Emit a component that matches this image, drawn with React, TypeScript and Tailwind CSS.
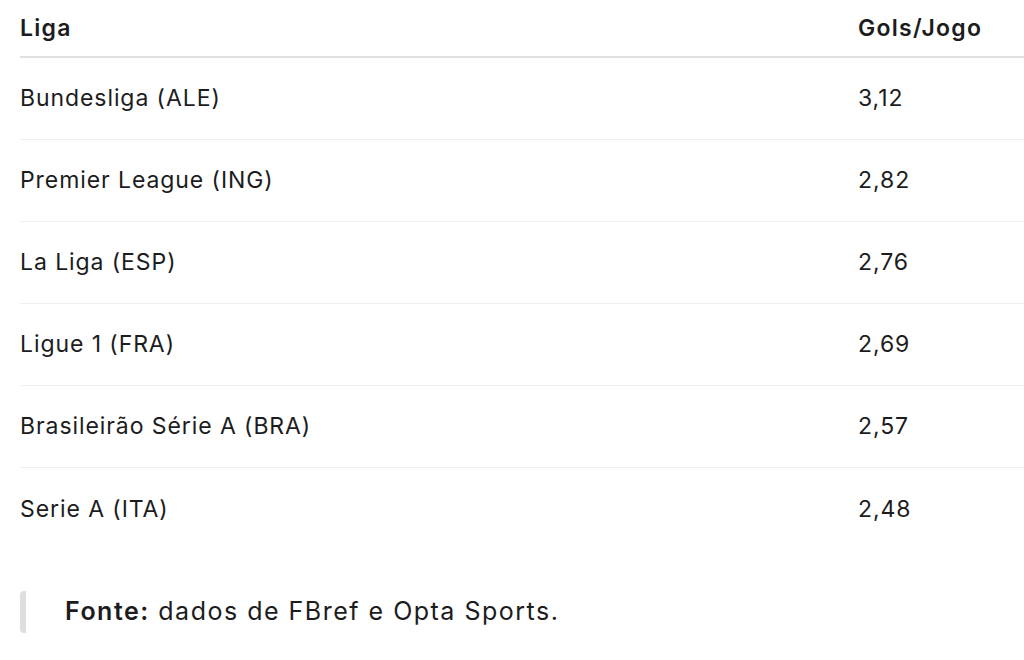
const ROWS = [
  ['Bundesliga (ALE)', '3,12'],
  ['Premier League (ING)', '2,82'],
  ['La Liga (ESP)', '2,76'],
  ['Ligue 1 (FRA)', '2,69'],
  ['Brasileirão Série A (BRA)', '2,57'],
  ['Serie A (ITA)', '2,48'],
];

export default function App() {
  return (
    <main className="min-h-screen w-full bg-white pl-5 text-[#1c1c1e] [font-family:Inter,'Noto_Sans',sans-serif]">
      <div className="grid grid-cols-[1fr_166px] border-b-2 border-[#e0e0e0] h-[58px] items-center text-[23px] font-semibold tracking-[0.055em]">
        <div>Liga</div>
        <div>Gols/Jogo</div>
      </div>
      {ROWS.map(([liga, gols], i) => (
        <div
          key={liga}
          className={`grid grid-cols-[1fr_166px] h-[82px] items-center text-[23px] tracking-[0.04em] ${
            i < ROWS.length - 1 ? 'border-b border-[#efefef]' : ''
          }`}
        >
          <div>{liga}</div>
          <div>{gols}</div>
        </div>
      ))}
      <blockquote className="mt-[41px] flex items-center border-l-[6px] border-[#dedede] rounded-sm h-[42px] pl-[39px] text-[25px] tracking-[0.06em]">
        <p>
          <strong className="font-semibold">Fonte:</strong> dados de FBref e Opta Sports.
        </p>
      </blockquote>
    </main>
  );
}
